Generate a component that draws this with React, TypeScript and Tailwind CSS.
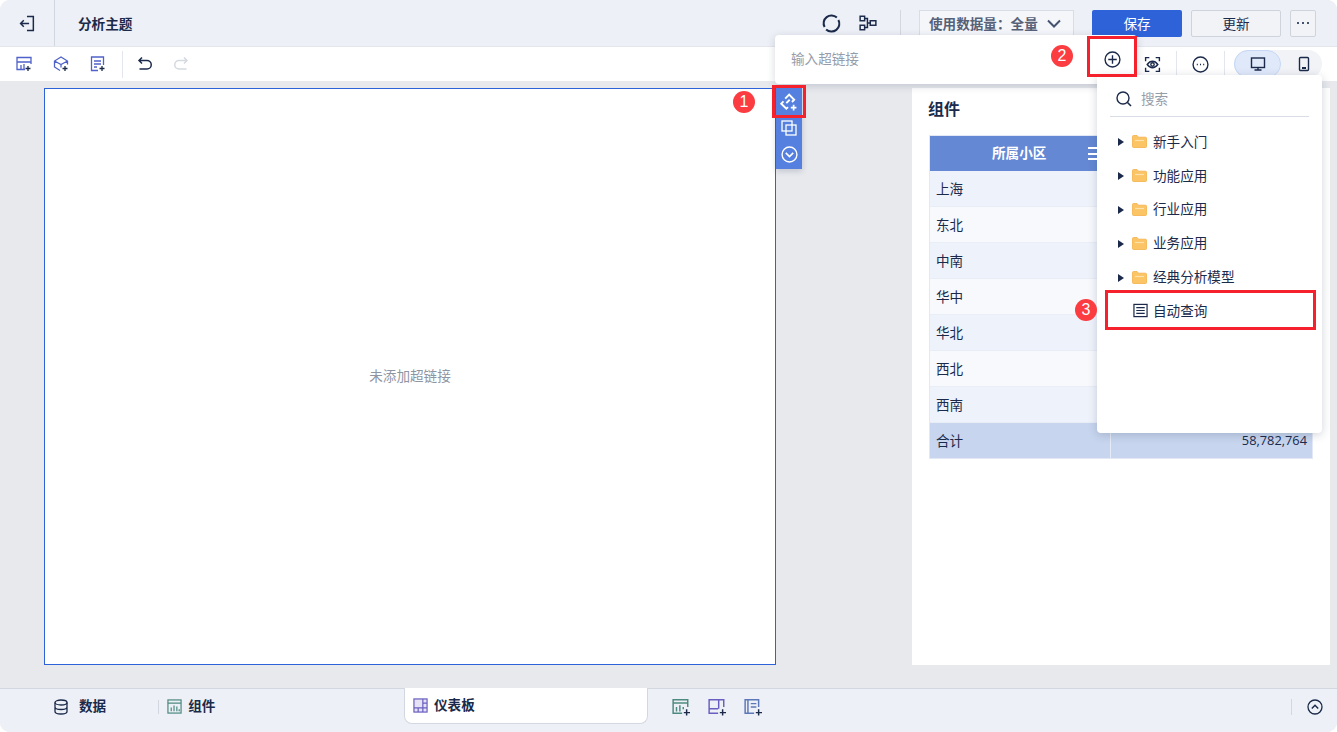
import type { ReactNode } from 'react';

const navy = '#1b2a4a';

const rows = ['上海', '东北', '中南', '华中', '华北', '西北', '西南'];
const folders = ['新手入门', '功能应用', '行业应用', '业务应用', '经典分析模型'];

function Icon({ size = 16, children, className = '' }: { size?: number; children: ReactNode; className?: string }) {
  return (
    <svg width={size} height={size} viewBox="0 0 16 16" fill="none" stroke="currentColor" strokeWidth="1.3" className={`shrink-0 ${className}`}>
      {children}
    </svg>
  );
}

function Badge({ n, className }: { n: number; className: string }) {
  return (
    <div className={`absolute flex h-[22px] w-[22px] items-center justify-center rounded-full bg-[#fb3c40] font-['Liberation_Sans',sans-serif] text-[16px] text-white ${className}`}>
      {n}
    </div>
  );
}

function Folder() {
  return (
    <svg width="15" height="13" viewBox="0 0 15 13" className="block shrink-0">
      <path d="M0.5 1.5 a1 1 0 0 1 1-1 h3.5 l1.5 1.7 h7 a1 1 0 0 1 1 1 v8.3 a1 1 0 0 1-1 1 h-12 a1 1 0 0 1-1-1z" fill="#fbc565" stroke="#f4b04a" strokeWidth="0.8" />
      <path d="M3 5.5 h9" stroke="#fde2ae" strokeWidth="1.2" />
    </svg>
  );
}

export default function App() {
  return (
    <div className="relative h-[732px] w-[1337px] overflow-hidden rounded-[10px] bg-[#e7e9ed] text-[13.6px] text-[#1b2a4a] font-['Noto_Sans_CJK_SC','Liberation_Sans',sans-serif]">
      {/* Header */}
      <div className="flex h-[47px] items-center border-b border-[#e3e6ec] bg-[#edf0f6]">
        <div className="flex h-full w-[55px] items-center justify-center border-r border-[#d3d7df]">
          <Icon size={17}>
            <path d="M7.5 1.5 h6 v13 h-6 M1.5 8 h8 M4.5 5 L1.5 8 l3 3" strokeWidth="1.4" />
          </Icon>
        </div>
        <div className="ml-[23px] font-bold">分析主题</div>
        <div className="ml-auto flex items-center pr-[21px]">
          <Icon size={19}>
            <path d="M12.5 3 A6.6 6.6 0 0 0 2.2 11" strokeWidth="1.7" />
            <path d="M3.5 13 A6.6 6.6 0 0 0 13.8 5" strokeWidth="1.7" />
          </Icon>
          <Icon size={18} className="ml-[18px]">
            <rect x="1" y="2" width="4" height="4" />
            <rect x="1" y="10" width="4" height="4" />
            <rect x="10" y="6" width="5" height="4" />
            <path d="M5 4 h2.5 v8 H5 M7.5 8 H10" />
          </Icon>
          <div className="ml-[23px] h-[26px] w-px bg-[#d3d7df]" />
          <div className="ml-[18px] flex h-[26px] w-[155px] items-center border border-[#d9dde5] bg-[#f4f6fa] pl-[9px] text-[#566178] font-bold">
            使用数据量：全量
            <svg width="14" height="9" viewBox="0 0 14 9" fill="none" stroke="#44536f" strokeWidth="2" className="ml-[9px]">
              <path d="M1 1.5 l6 6 l6-6" />
            </svg>
          </div>
          <div className="ml-[18px] flex h-[27px] w-[90px] items-center justify-center rounded-[2px] bg-[#2d62d9] text-white">保存</div>
          <div className="ml-[9px] flex h-[27px] w-[90px] items-center justify-center rounded-[2px] border border-[#cfd3db] bg-[#f1f3f7]">更新</div>
          <div className="ml-[9px] flex h-[27px] w-[26px] items-center justify-center rounded-[2px] border border-[#cfd3db] bg-[#f1f3f7]">
            <svg width="12" height="3" viewBox="0 0 12 3" fill="#44536f">
              <rect x="0" y="0" width="2" height="2" />
              <rect x="5" y="0" width="2" height="2" />
              <rect x="10" y="0" width="2" height="2" />
            </svg>
          </div>
        </div>
      </div>

      {/* Toolbar */}
      <div className="flex h-[34px] items-center bg-white pl-[16px]">
        <Icon className="text-[#4f62c9]">
          <path d="M9 13.5 H1 v-12 h14 V8 M1 6 h14 M5 13 V9 M8 13 V8" />
          <path d="M12 10 v5 M9.5 12.5 h5" stroke={navy} />
        </Icon>
        <Icon className="ml-[21px] text-[#4f62c9]">
          <path d="M7 14.5 L1.5 11 V5 L8 1 L14.5 5 v3.5 M1.5 5 L8 8.5 L14.5 5 M8 8.5 v3" />
          <path d="M12 10 v5 M9.5 12.5 h5" stroke={navy} />
        </Icon>
        <Icon className="ml-[21px] text-[#4f62c9]">
          <path d="M8 14.5 H1.5 V1 h12 v8 M4 5 h7 M4 8 h7 M4 11 h3" />
          <path d="M12 10 v5 M9.5 12.5 h5" stroke={navy} />
        </Icon>
        <div className="ml-[16px] h-[27px] w-px bg-[#e3e6ec]" />
        <Icon className="ml-[14px]" size={16}>
          <path d="M5 1.5 L2 4.5 l3 3 M2 4.5 h8 a4 4 0 0 1 0 8.5 H2.5" strokeWidth="1.5" />
        </Icon>
        <Icon className="ml-[20px] text-[#d5d9e0]" size={16}>
          <path d="M11 1.5 l3 3 l-3 3 M14 4.5 H6 a4 4 0 0 0 0 8.5 h7.5" strokeWidth="1.5" />
        </Icon>
        <div className="ml-auto flex items-center pr-[15px]">
          <Icon size={17}>
            <path d="M1.5 5 V1.5 H5 M11 1.5 h3.5 V5 M14.5 11 v3.5 H11 M5 14.5 H1.5 V11" />
            <path d="M3 8 c3-4 7-4 10 0 c-3 4-7 4-10 0z" />
            <circle cx="8" cy="8" r="1.6" />
          </Icon>
          <div className="ml-[15px] h-[27px] w-px bg-[#e3e6ec]" />
          <Icon size={17} className="ml-[15px]">
            <circle cx="8" cy="8" r="7" />
            <path d="M4.5 8 h1 M7.5 8 h1 M10.5 8 h1" strokeWidth="1.4" />
          </Icon>
          <div className="ml-[15px] h-[27px] w-px bg-[#e3e6ec]" />
          <div className="ml-[9px] flex h-[28px] w-[88px] rounded-full bg-[#f1f3f7]">
            <div className="flex w-[47px] items-center justify-center rounded-full border border-[#c5d7f5] bg-[#dfe9fa]">
              <Icon size={16}>
                <rect x="1.5" y="2" width="13" height="9.5" strokeWidth="1.4" />
                <path d="M8 11.5 v2.5 M4.5 14 h7" strokeWidth="1.4" />
              </Icon>
            </div>
            <div className="flex flex-1 items-center justify-center pl-[4px]">
              <Icon size={16}>
                <rect x="3.5" y="1.5" width="9" height="13" rx="1" strokeWidth="1.4" />
                <path d="M6 12 h4" strokeWidth="1.8" />
              </Icon>
            </div>
          </div>
        </div>
      </div>

      {/* Main area */}
      <div className="flex h-[607px] pt-[7px] pl-[44px]">
        <div className="flex h-[577px] w-[732px] items-center justify-center border border-[#2d62d9] bg-white pb-[2px] text-[#8e95a3]">
          未添加超链接
        </div>
        <div className="ml-[136px] h-[577px] w-[418px] bg-white pl-[17px]">
          <div className="mt-[8px] -ml-px text-[16px] leading-[24px] font-bold">组件</div>
          <div className="mt-[15px] w-[384px] border border-[#e3e9f4]">
            <div className="flex h-[35px] items-center bg-[#6488d3] pb-[2px] text-white font-bold">
              <div className="w-[181px] pl-[62px]">所属小区</div>
            </div>
            {rows.map((r, i) => (
              <div key={r} className={`flex h-[36px] items-center border-b border-[#e8edf6] pl-[6px] ${i % 2 === 0 ? 'bg-[#eef3fb]' : 'bg-[#f7f9fd]'}`}>
                {r}
              </div>
            ))}
            <div className="flex h-[35px] items-center bg-[#c7d5ee]">
              <div className="flex h-full w-[181px] items-center border-r border-[#e6ecf7] pl-[6px]">合计</div>
              <div className="flex-1 pr-[5px] text-right font-['Open_Sans',sans-serif] text-[12.8px]">58,782,764</div>
            </div>
          </div>
        </div>
      </div>

      {/* Bottom bar */}
      <div className="flex h-[44px] border-t border-[#d3d7df] bg-[#edf0f6]">
        <div className="flex h-[35px] w-[404px] items-center pl-[53px] font-bold">
          <Icon size={16}>
            <ellipse cx="8" cy="3.5" rx="6" ry="2.5" />
            <path d="M2 3.5 v9 c0 1.4 2.7 2.5 6 2.5 s6-1.1 6-2.5 v-9 M2 8 c0 1.4 2.7 2.5 6 2.5 s6-1.1 6-2.5" />
          </Icon>
          <span className="ml-[10px] pb-[2px]">数据</span>
          <div className="ml-[52px] h-[14px] w-px bg-[#d3d7df]" />
          <Icon size={15} className="ml-[8px] text-[#4d8a80]">
            <rect x="1" y="1" width="14" height="14" />
            <path d="M1 4.5 h14 M4.5 13 V9 M7.5 13 V7 M10.5 13 V8 M13 13 v-2" />
          </Icon>
          <span className="ml-[6px] pb-[2px]">组件</span>
        </div>
        <div className="-mt-px flex h-[36px] w-[244px] items-center rounded-b-[8px] border border-t-0 border-[#d3d7df] bg-white pl-[8px] font-bold">
          <Icon size={15} className="text-[#6a5fc0]">
            <rect x="1" y="1" width="14" height="14" fill="#e6e2f6" />
            <path d="M1 10.5 h14 M10.5 1 v14 M10.5 5.5 h4.5 M5.5 10.5 V15" />
          </Icon>
          <span className="ml-[6px] pb-[2px]">仪表板</span>
        </div>
        <div className="flex h-[35px] items-center pl-[24px]">
          <Icon size={18} className="text-[#4d8a80]">
            <path d="M9 13.5 H1 V1.5 h13 V8 M1 4.5 h13 M4 12 V8 M7 12 V6.5 M10 10 V8" />
            <path d="M13 10 v5.5 M10.5 13 h5.5" stroke={navy} />
          </Icon>
          <Icon size={18} className="ml-[18px] text-[#6a5fc0]">
            <path d="M9 13.5 H1 V1.5 h13 V8 M1 9.5 h8 M9.5 1.5 v8" />
            <path d="M13 10 v5.5 M10.5 13 h5.5" stroke={navy} />
          </Icon>
          <Icon size={18} className="ml-[18px] text-[#5d78b8]">
            <path d="M9 13.5 H1 V1.5 h12 V8 M3.5 1.5 v12 M6 5 h5 M6 8 h5" />
            <path d="M13 10 v5.5 M10.5 13 h5.5" stroke={navy} />
          </Icon>
        </div>
        <div className="ml-auto flex h-[35px] items-center pr-[14px]">
          <div className="h-[16px] w-px bg-[#d3d7df]" />
          <Icon size={16} className="ml-[15px]">
            <circle cx="8" cy="8" r="7" />
            <path d="M4.8 9.5 L8 6.3 l3.2 3.2" strokeWidth="1.5" />
          </Icon>
        </div>
      </div>

      {/* Hyperlink popover */}
      <div className="absolute top-[35px] left-[775px] flex h-[49px] w-[362px] items-center rounded-[4px] bg-white pb-[2px] pl-[16px] text-[#969daa] shadow-[0_2px_8px_rgba(30,40,70,0.18)]">
        输入超链接
        <Icon size={17} className="absolute top-[16px] left-[329px] text-[#1b2a4a]">
          <circle cx="8" cy="8" r="7" />
          <path d="M8 4 v8 M4 8 h8" />
        </Icon>
      </div>

      {/* Floating side toolbar */}
      <div className="absolute top-[88px] left-[776px] flex h-[81px] w-[26px] flex-col items-center bg-[#5580e0] pt-[5px] text-white shadow-[0_2px_6px_rgba(30,40,70,0.2)]">
        <Icon size={18} className="-ml-[2px] text-white">
          <path d="M5.5 5 L9 1.5 L13.5 6 L11.5 8 M8 12.5 L6.5 14 L2 9.5 L4 7.5 M6.5 9 L9.5 6" strokeWidth="1.7" />
          <path d="M13 10.5 v5 M10.5 13 h5" strokeWidth="1.5" />
        </Icon>
        <Icon size={16} className="mt-[9px] text-white">
          <rect x="1" y="1" width="10" height="10" />
          <rect x="5" y="5" width="10" height="10" />
        </Icon>
        <Icon size={17} className="mt-[10px] text-white">
          <circle cx="8" cy="8" r="7" />
          <path d="M4.5 6.5 L8 10 l3.5-3.5" strokeWidth="1.5" />
        </Icon>
      </div>

      {/* Report tree dropdown */}
      <div className="absolute top-[75px] left-[1097px] h-[358px] w-[225px] rounded-[4px] bg-white shadow-[0_2px_10px_rgba(30,40,70,0.2)]">
        <div className="mx-[13px] mt-[9px] flex h-[33px] items-center border-b border-[#d9dde5] pb-[3px] pl-[6px] text-[#969daa]">
          <Icon size={16} className="text-[#1b2a4a]">
            <circle cx="7" cy="7" r="6" strokeWidth="1.4" />
            <path d="M11.5 11.5 L15 15" strokeWidth="1.6" />
          </Icon>
          <span className="ml-[9px]">搜索</span>
        </div>
        <div className="mt-[7px]">
          {folders.map((f) => (
            <div key={f} className="flex h-[33.8px] items-center pl-[21px]">
              <svg width="6" height="8" viewBox="0 0 6 8" className="mt-[3px] shrink-0" fill="#1b2a4a">
                <path d="M0 0 L6 4 L0 8z" />
              </svg>
              <span className="mt-[2px] ml-[8px]"><Folder /></span>
              <span className="ml-[6px]">{f}</span>
            </div>
          ))}
          <div className="flex h-[33.8px] items-center pl-[36px]">
            <Icon size={15} className="mt-[1px]">
              <rect x="1" y="1.5" width="14" height="13" />
              <path d="M3.5 5 h9 M3.5 8 h9 M3.5 11 h9" />
            </Icon>
            <span className="ml-[5px]">自动查询</span>
          </div>
        </div>
      </div>

      {/* Table column icon, peeking out beside the dropdown */}
      <div className="absolute top-[147px] left-[1088px] flex h-[13px] w-[9px] flex-col justify-between overflow-hidden">
        <div className="h-[2px] w-[12px] bg-white" />
        <div className="h-[2px] w-[12px] bg-white" />
        <div className="h-[2px] w-[12px] bg-white" />
      </div>

      {/* Annotations */}
      <div className="absolute top-[85px] left-[772px] h-[33px] w-[34px] border-[3px] border-[#f5222d]" />
      <div className="absolute top-[36px] left-[1087px] h-[41px] w-[50px] border-[3px] border-[#f5222d]" />
      <div className="absolute top-[290px] left-[1105px] h-[40px] w-[211px] border-[3px] border-[#f5222d]" />
      <Badge n={1} className="top-[91px] left-[733px]" />
      <Badge n={2} className="top-[45px] left-[1051px]" />
      <Badge n={3} className="top-[299px] left-[1075px]" />
    </div>
  );
}
